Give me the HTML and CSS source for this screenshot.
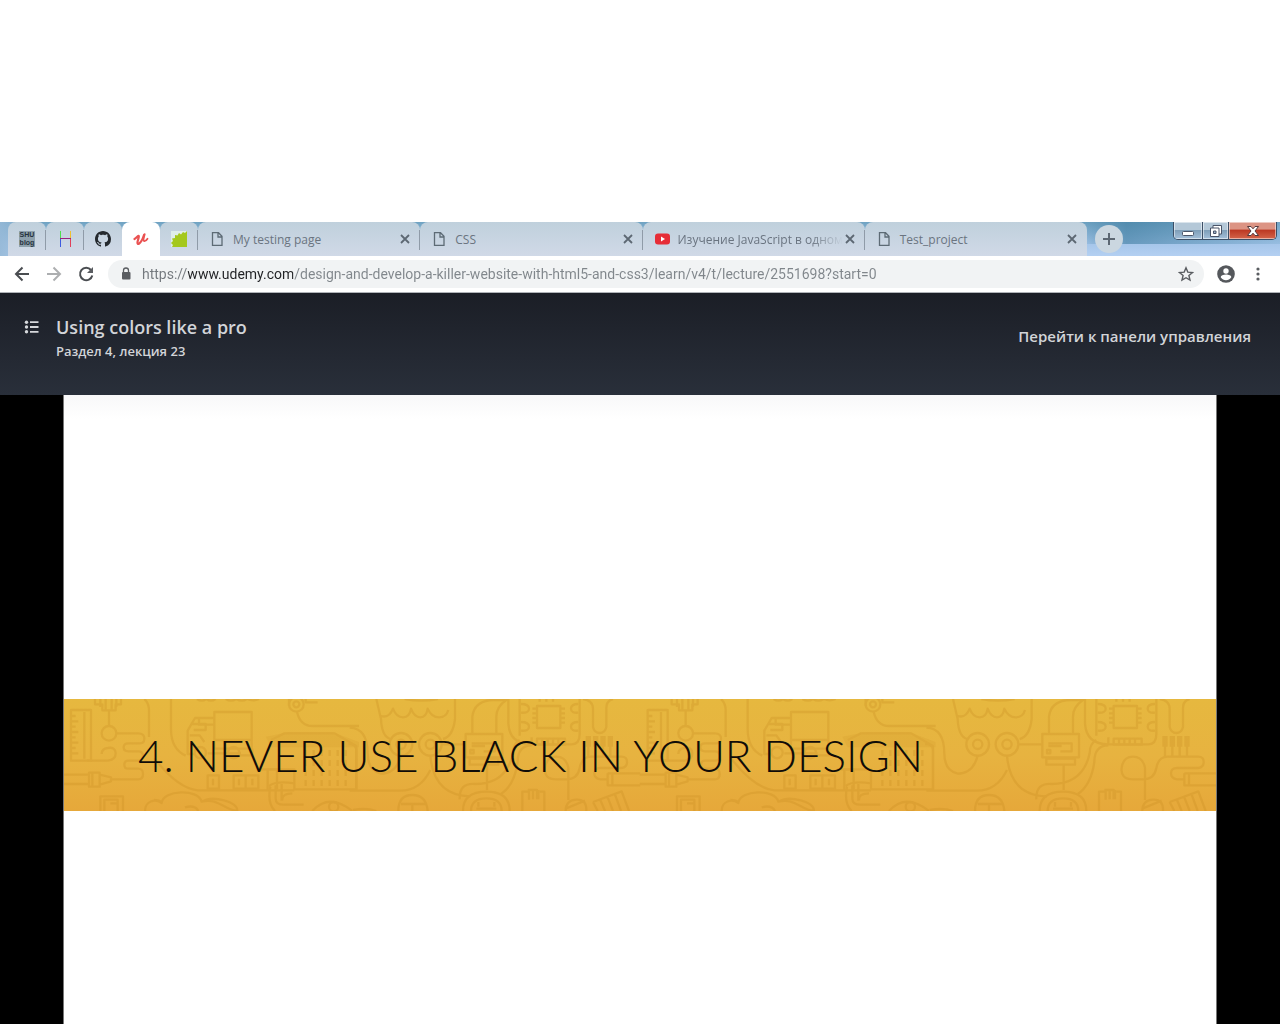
FILE: index.html
```html
<!DOCTYPE html>
<html lang="ru">
<head>
<meta charset="utf-8">
<title>Using colors like a pro</title>
<link rel="stylesheet" href="styles.css">
</head>
<body>
<div class="browser">
  <div class="strip">
    <nav class="tabs" aria-label="Tabs">
      <a class="tab pinned" href="#" aria-label="SHU blog">
        <span class="shu"><b>SHU</b><b>blog</b></span>
      </a>
      <a class="tab pinned" href="#" aria-label="H">
        <svg width="16" height="16" viewBox="0 0 16 16" fill="none" stroke-width="1"><path d="M3.500 0v8" stroke="#4fe04f"/><path d="M3.500 8v8" stroke="#3d5be0"/><path d="M13.500 0v8" stroke="#f0c030"/><path d="M13.500 8v8" stroke="#e0405a"/><path d="M3 7.500h11" stroke="#9b2080"/></svg>
      </a>
      <a class="tab pinned" href="#" aria-label="GitHub">
        <svg width="16" height="16" viewBox="0 0 16 16" fill="#24292e"><path d="M8 0C3.580 0 0 3.580 0 8c0 3.540 2.290 6.530 5.470 7.590.4.070.55-.17.55-.38 0-.19-.01-.82-.01-1.490-2.010.37-2.530-.49-2.690-.94-.09-.23-.48-.94-.82-1.130-.28-.15-.68-.52-.01-.53.63-.01 1.080.58 1.230.82.72 1.210 1.870.87 2.330.66.070-.52.28-.87.51-1.070-1.780-.2-3.640-.89-3.640-3.950 0-.87.31-1.590.82-2.150-.08-.2-.36-1.020.080-2.120 0 0 .67-.21 2.200.82.64-.18 1.320-.27 2-.27s1.360.090 2 .27c1.530-1.040 2.200-.82 2.200-.82.44 1.100.16 1.920.080 2.120.51.56.82 1.270.82 2.150 0 3.070-1.870 3.750-3.650 3.950.29.25.54.73.54 1.480 0 1.070-.01 1.930-.01 2.200 0 .21.15.46.55.38A8.010 8.010 0 0 0 16 8c0-4.420-3.580-8-8-8z"/></svg>
      </a>
      <a class="tab pinned active" href="#" aria-current="page" aria-label="Udemy">
        <svg width="16" height="16" viewBox="0 0 16 16" fill="none" stroke="#ea5252" stroke-linecap="round" stroke-linejoin="round"><path d="M1.500 8C3 7.300 4.500 5 5.500 4.800S4.800 9.500 4.500 11s.4 2.300 1.700 1.500C8 11.300 9.700 8 11 4" stroke-width="2.200"/><path d="M11.700 3.200C10.900 6 9.700 9.800 11.200 10.200c1.200.2 2.400-1 3.300-2.400" stroke-width="1.800"/></svg>
      </a>
      <a class="tab pinned" href="#" aria-label="Gear">
        <svg width="16" height="16" viewBox="0 0 16 16"><path d="M0 0h16v16H0z" fill="#dfeee8"/><path d="M16 0v16H1l1-2-2-2 2-2-1-2.500 3-.5V4l2.500.5L8 2l2 1.500L12 1l2 1z" fill="#a4c81c"/></svg>
      </a>
      <div class="tab">
        <a class="label" href="#"><svg width="16" height="16" viewBox="0 0 16 16" class="line"><path d="M3.500 1.700h6l3.500 3.600v9H3.500zM9 2v4h4"/></svg><span>My testing page</span></a>
        <button class="close" aria-label="Close tab"><svg width="10" height="10" viewBox="0 0 10 10"><path d="M1 1l8 8M9 1L1 9"/></svg></button>
      </div>
      <div class="tab">
        <a class="label" href="#"><svg width="16" height="16" viewBox="0 0 16 16" class="line"><path d="M3.500 1.700h6l3.500 3.600v9H3.500zM9 2v4h4"/></svg><span>CSS</span></a>
        <button class="close" aria-label="Close tab"><svg width="10" height="10" viewBox="0 0 10 10"><path d="M1 1l8 8M9 1L1 9"/></svg></button>
      </div>
      <div class="tab">
        <a class="label" href="#"><svg width="16" height="16" viewBox="0 0 16 16"><rect x="1" y="2.500" width="15" height="11" rx="3" fill="#e62d37"/><path d="M7 5.500v5L11 8z" fill="#fff"/></svg><span class="fade">Изучение JavaScript в одном</span></a>
        <button class="close" aria-label="Close tab"><svg width="10" height="10" viewBox="0 0 10 10"><path d="M1 1l8 8M9 1L1 9"/></svg></button>
      </div>
      <div class="tab last">
        <a class="label" href="#"><svg width="16" height="16" viewBox="0 0 16 16" class="line"><path d="M3.500 1.700h6l3.500 3.600v9H3.500zM9 2v4h4"/></svg><span>Test_project</span></a>
        <button class="close" aria-label="Close tab"><svg width="10" height="10" viewBox="0 0 10 10"><path d="M1 1l8 8M9 1L1 9"/></svg></button>
      </div>
    </nav>
    <button class="newtab" aria-label="New tab"><svg width="12" height="12" viewBox="0 0 12 12"><path d="M6 0v12M0 6h12"/></svg></button>
    <div class="winbtns">
      <button class="win" aria-label="Minimize"><svg width="14" height="12" viewBox="0 0 14 12"><rect x="1.500" y="6.500" width="11" height="4" rx="1" fill="#fff" stroke="#4a5468"/></svg></button>
      <button class="win mid" aria-label="Restore"><svg width="14" height="14" viewBox="0 0 14 14"><path d="M4 1.500h8.500V10H4z" fill="#fff" stroke="#4a5468"/><path d="M1.500 4H10v8.500H1.500z" fill="#fff" stroke="#4a5468"/><path d="M4.500 7h2.500v2.500H4.500z" fill="#9eb4cc" stroke="#4a5468"/></svg></button>
      <button class="win red" aria-label="Close"><svg width="14" height="12" viewBox="0 0 14 12"><path d="M1.500 1.500h3.500L7 3.800 9 1.500h3.500L9 6l3.500 4.500H9L7 8.200 5 10.500H1.500L5 6z" fill="#fff" stroke="#54393c"/></svg></button>
    </div>
  </div>
  <div class="toolbar">
    <button class="tool" aria-label="Back"><svg width="16" height="16" viewBox="0 0 16 16" class="arrow"><path d="M15 8H2M8.500 1.500L2 8l6.500 6.500"/></svg></button>
    <button class="tool dim" aria-label="Forward"><svg width="16" height="16" viewBox="0 0 16 16" class="arrow"><path d="M1 8h13M7.500 1.500L14 8l-6.500 6.500"/></svg></button>
    <button class="tool" aria-label="Reload"><svg width="16" height="16" viewBox="0 0 16 16" class="arrow"><path d="M13 4a6.200 6.200 0 1 0 1.300 5.500"/><path d="M15 1v6H9z" fill="#5a5d61" stroke="none"/></svg></button>
    <div class="omnibox">
      <svg width="10" height="14" viewBox="0 0 10 14"><path d="M2.500 6V3.500a2.500 2.500 0 0 1 5 0V6" fill="none" stroke="#5a5d61" stroke-width="1.300"/><rect x="1" y="5" width="8.500" height="7.500" rx="1" fill="#5a5d61"/></svg>
      <input class="url" type="text" aria-label="Address" value="https://www.udemy.com/design-and-develop-a-killer-website-with-html5-and-css3/learn/v4/t/lecture/2551698?start=0">
      <button class="tool" aria-label="Bookmark"><svg width="16" height="16" viewBox="0 0 16 16"><path d="M8 1.800l1.800 4.300 4.700.4-3.600 3 1.100 4.600L8 11.700l-4 2.400 1.100-4.600-3.600-3 4.700-.4z" fill="none" stroke="#5a5d61" stroke-width="1.400"/></svg></button>
    </div>
    <button class="tool" aria-label="Profile"><svg width="18" height="18" viewBox="0 0 18 18"><circle cx="9" cy="9" r="8.800" fill="#55585c"/><circle cx="9" cy="6" r="2.700" fill="#fff"/><path d="M3.700 12.300c0-3.600 10.600-3.600 10.600 0-2.500 3.800-8.100 3.800-10.600 0z" fill="#fff"/></svg></button>
    <button class="tool" aria-label="Menu"><svg width="16" height="16" viewBox="0 0 16 16" fill="#5a5d61"><circle cx="8" cy="3" r="1.600"/><circle cx="8" cy="8" r="1.600"/><circle cx="8" cy="13" r="1.600"/></svg></button>
  </div>
</div>

<header class="lecture">
  <button class="contents" aria-label="Contents"><svg width="16" height="14" viewBox="0 0 16 14" fill="#d6d8db"><circle cx="2.500" cy="2.200" r="1.700"/><circle cx="2.500" cy="7" r="1.700"/><circle cx="2.500" cy="11.800" r="1.700"/><path d="M6 1.200h8.500v1.800H6zM6 6.100h8.500v1.800H6zM6 10.900h8.500v1.800H6z"/></svg></button>
  <div class="heading">
    <h1>Using colors like a pro</h1>
    <p>Раздел 4, лекция 23</p>
  </div>
  <a class="dashboard" href="#">Перейти к панели управления</a>
</header>

<main class="stage">
  <section class="slide">
    <div class="banner">
      <svg class="pattern" viewBox="0 0 3462 336" preserveAspectRatio="xMidYMid slice" aria-hidden="true">
        <defs>
          <g id="tile" fill="none" stroke="#c88c20" stroke-width="7" stroke-linejoin="round">
            <g transform="translate(-12 -27)">
              <path d="M36 60h60v152h-60zM76 66v140M36 78h14M36 94h22M36 110h14M36 126h22M36 142h14M36 158h22M36 174h14M36 190h22"/>
              <path d="M108 27v16h22v18h40V43h16V27M124 27v24M140 27v32M158 27v32M172 27v24M150 60v48"/>
              <circle cx="150" cy="130" r="22"/>
              <path d="M172 130h66q18 0 18 16t-18 14h-30q-14 0-14 12t14 12h30q14 0 14 14t-14 14h-30q-12 0-12 12t12 12h30q14 0 14 16t-14 16H158M84 212h62q24-2 24-22t-24-16q-18 2-18 18"/>
              <path d="M12 254h78v28H12M90 248h32v42H90zM100 248v42M122 254l34 8v12l-34 10M256 27q14 12 14 34v80M336 27v90q0 60 44 80M286 205q70 90 130 96h290"/>
              <path d="M466 66h112v110H466zM466 84h-58l-22 38v70h20M400 102h40v18h-36M392 136h30l14 20M420 84v20h44M446 190h100M580 176v20H540M466 150h112"/>
              <circle cx="424" cy="188" r="17"/><circle cx="524" cy="188" r="17"/>
              <path d="M690 27v22M740 27v10h36M714 66q10 42 46 42h140"/><circle cx="712" cy="43" r="22"/><circle cx="712" cy="43" r="9"/>
              <path d="M414 27q14 10 28 0q14 10 28 0M500 27q16 10 32 0q16 10 32 0q18 8 36 0"/>
              <path d="M636 150l40-20h150l66 38v130H706v-60h-80v62"/><path d="M620 140l70-14h130l80 30v16H636z" fill="#c88c20" fill-opacity="0.5" stroke="none"/>
              <path d="M740 180v120M764 180v120M788 180v120M812 180v120M836 180v120M860 180v120" stroke-dasharray="18 12"/>
              <path d="M446 256h34v40h-34zM462 266v20M524 256h74v40h-74zM560 256v40M540 266v20M580 266v20M604 238h50v60"/>
              <path d="M124 363v-44h68v44M136 363v-34h40v34M154 340h20"/>
              <path d="M258 363c0-30 30-38 50-24c4-40 110-44 120-4c50-14 70 28 110 28M284 330c6 0 18 0 24 8M430 335c30-20 110 0 104 28M378 352q30-8 40 11"/>
              <path d="M634 290q-10 50 14 73M650 286v40q0 18 24 18h60M668 282v50M630 288q20-16 76-8M700 310q-32 0-30 22M760 363q50-56 120 0"/><circle cx="824" cy="350" r="14"/>
            </g>
            <g transform="translate(870 -27)">
              <path d="M70 27l14 60q2 52 28 60M306 27v60q-6 52-36 60M84 78q24 8 36-22q10 26 30 26t24-26q10 26 28 26t22-26q12 26 34 26t28-22"/>
              <path d="M155 27q50 10 100 0"/>
              <circle cx="144" cy="163" r="34"/><circle cx="144" cy="163" r="14"/><circle cx="232" cy="163" r="34"/><circle cx="232" cy="163" r="14"/>
              <path d="M266 163h72M144 197q-14 54-60 54q-40-10-40-60q0-76-54-78M232 197q10 120 120 122M232 240q-30 62-90 62H-10M10 300V180q0-18-24-18"/>
              <path d="M338 132h110v70H338zM356 160h70v24h-34M356 168h40M352 180h10v10h-10zM350 206h86v18h-86zM358 130V80q6-50 66-50h36q-30 20-30 50v50M402 226v74M466 27v74q4 62 70 62h120q24 0 24-30V27M500 27v110M500 150q-20 10-20 40q-20 92-114 92q-48-4-46 46M536 166q-42 0-42 50q-10 70-50 96"/>
              <path d="M552 48h70v66h-70zM538 56h14M538 70h14M538 84h14M538 98h14M622 56h14M622 70h14M622 84h14M622 98h14M560 27v8M580 27v8M600 27v8M536 142v20M552 146h84v18h-84zM568 146v18M584 146v18M600 146v18M616 146v18"/>
              <path d="M504 42q24 0 24 14t-24 12M504 96q24 0 24 14t-24 12M676 42q-22 0-22 14t22 12M676 96q-22 0-22 14t22 12M690 27q30 4 30 30v54q4 18 20 18t20-18V54q0-22 20-27"/>
              <path d="M698 138h16v32h-16zM720 138h16v32h-16zM742 138h16v32h-16zM764 138h16v32h-16z" fill="#c88c20" stroke="none"/><path d="M706 168v30M728 168v30M750 168v30M772 168v30"/>
              <path d="M646 330V234q-6-34-36-34t-34 34t34 34h30q34 0 40-34t34-34h92q16 0 16 16t-16 18h-64q-18 0-18 16t18 18h20M764 250v36h98M778 250v36M764 250h98"/>
              <path d="M330 363q0-58 70-58t70 58M354 363q0-38 46-38t46 38M376 336v14M424 336v14M370 356h60M508 363v-58h20v24M540 328v-28M556 328v-28M524 300h28v28M560 305h14v58M638 363q0-32 32-34t30 34M638 356l58-24M720 336l86-32 22 59M720 336l14 27M742 330l14 33M764 322l16 41M786 314l18 49"/>
              <path d="M136 363q0-48 42-48t46 48M144 342h74M178 342v21M0 360q40-8 70 3"/>
            </g>
          </g>
        </defs>
        <use href="#tile"/>
        <use href="#tile" x="1730"/>
      </svg>
      <h2>4. NEVER USE BLACK IN YOUR DESIGN</h2>
    </div>
  </section>
</main>
</body>
</html>
```
FILE: styles.css
```css
* { box-sizing: border-box; }

body {
  margin: 0;
  padding-top: 222px;
  min-height: 100vh;
  display: flex;
  flex-direction: column;
  background: #fff;
  font-family: "Open Sans", "Noto Sans", sans-serif;
}

button {
  display: flex;
  align-items: center;
  justify-content: center;
  padding: 0;
  border: 0;
  background: none;
}

a { color: inherit; text-decoration: none; }
svg { flex: none; display: block; }

/* Tab strip */
.strip {
  display: flex;
  align-items: center;
  height: 34px;
  padding-left: 8px;
  background:
    linear-gradient(90deg, rgba(150, 185, 215, 0.9), transparent 3%),
    linear-gradient(90deg, transparent 84%, rgba(62, 124, 160, 0.6) 88%, rgba(120, 170, 205, 0.3)) 0 0 / 100% 22px no-repeat,
    linear-gradient(#6fa3c2, #a6c6ea 65%, #b4d0f2);
}

.tabs {
  display: flex;
  align-self: stretch;
  flex: 0 1 1079px;
  min-width: 0;
}

.tab {
  position: relative;
  display: flex;
  align-items: center;
  flex: 1 1 222px;
  min-width: 0;
  padding: 0 5px 0 11px;
  border-radius: 8px 8px 0 0;
  background: linear-gradient(#bfd0dc, #d0d9e7);
  color: #6a7480;
  font-size: 12px;
}

.tab::after {
  content: "";
  position: absolute;
  right: 0;
  top: 8px;
  width: 1px;
  height: 20px;
  background: #8f9ba8;
}

.tab.pinned {
  flex: 0 0 38px;
  justify-content: center;
  padding: 0;
}

.tab.active { background: #fff; }
.tab.active::after, .tab.last::after, .tab:nth-child(3)::after { display: none; }

.shu {
  display: flex;
  flex-direction: column;
  align-items: center;
  width: 16px;
  height: 16px;
  background: #8da0ac;
  color: #26333e;
  font: 7px/8px "Liberation Sans", sans-serif;
}

.label {
  display: flex;
  align-items: center;
  gap: 8px;
  flex: 1;
  min-width: 0;
}

.label span {
  flex: 1;
  white-space: nowrap;
}

.fade {
  -webkit-mask-image: linear-gradient(90deg, #000 80%, transparent);
  mask-image: linear-gradient(90deg, #000 80%, transparent);
}

.line { fill: none; stroke: #5d6b75; stroke-width: 1.3; }
.close { width: 20px; height: 20px; }
.close path { stroke: #5d6873; stroke-width: 1.8; }

.newtab {
  width: 28px;
  height: 28px;
  margin-left: 8px;
  border-radius: 50%;
  background: #cbd7e0;
}

.newtab path { stroke: #5d6873; stroke-width: 2; }

.winbtns {
  display: flex;
  align-self: flex-start;
  height: 18px;
  margin: 0 3px 0 auto;
  border: 1px solid #3c4f66;
  border-top: 0;
  border-radius: 0 0 5px 5px;
  overflow: hidden;
}

.win {
  width: 28px;
  background: linear-gradient(#b4c8d8 45%, #7f9fb9 50%, #a4c0da);
  box-shadow: inset 0 0 0 1px rgba(255, 255, 255, 0.5);
}

.win.mid { width: 27px; border: solid #3c4f66; border-width: 0 1px; }
.win.red { width: 47px; background: linear-gradient(#dc9484 40%, #bd3a24 50%, #d4654a); }

/* Address bar */
.toolbar {
  display: flex;
  align-items: center;
  height: 37px;
  padding: 0 6px 0 8px;
  border-bottom: 1px solid #b0b3b8;
  background: #fff;
}

.tool { width: 32px; height: 28px; }
.dim { opacity: 0.45; }
.arrow { fill: none; stroke: #4a4d51; stroke-width: 2; }
.toolbar > .tool:nth-child(1) { width: 28px; }
.toolbar > .tool:nth-child(2) { width: 36px; }
.toolbar > .tool:nth-child(3) { width: 28px; }

.omnibox {
  display: flex;
  align-items: center;
  flex: 1;
  height: 28px;
  margin: 0 6px 0 8px;
  padding: 0 2px 0 13px;
  border-radius: 14px;
  background: #f1f3f4;
}

.url {
  flex: 1;
  min-width: 0;
  height: 28px;
  margin-left: 11px;
  padding: 0;
  border: 0;
  outline: 0;
  font: 14px Roboto, "Noto Sans", sans-serif;
  color: transparent;
  caret-color: #222;
  background: linear-gradient(90deg, #73787d 46px, #202124 46px, #202124 151px, #80868b 151px);
  -webkit-background-clip: text;
  background-clip: text;
}

/* Lecture header */
.lecture {
  display: flex;
  align-items: flex-start;
  height: 102px;
  padding: 22px 29px 0 24px;
  background: linear-gradient(#1b1e26, #292f3a);
  color: #d2d4d8;
}

.contents { width: 16px; height: 24px; }
.heading { flex: 1; margin-left: 16px; }
h1 { margin: 0; font-size: 18px; font-weight: 600; line-height: 24px; }
.heading p { margin: 0; font-size: 13px; font-weight: 600; line-height: 24px; }
.dashboard { margin-top: 9px; font-size: 15px; font-weight: 600; line-height: 24px; }

/* Video stage */
.stage {
  display: flex;
  flex: 1;
  padding: 0 63px;
  background: #000;
}

.slide {
  flex: 1;
  padding-top: 304px;
  border: solid #777;
  border-width: 0 1px;
  background: linear-gradient(#f8f8f9, #fff 24px);
}

.banner {
  position: relative;
  display: flex;
  align-items: center;
  height: 112px;
  padding-left: 74px;
  background: linear-gradient(#e6b83f, #e7b340 50%, #e6a83a);
}

.pattern {
  position: absolute;
  inset: 0;
  width: 100%;
  height: 100%;
  opacity: 0.28;
}

h2 {
  position: relative;
  margin: 0;
  color: #100c08;
  font-family: Lato, sans-serif;
  font-size: 44px;
  font-weight: 300;
  line-height: 56px;
}
```
